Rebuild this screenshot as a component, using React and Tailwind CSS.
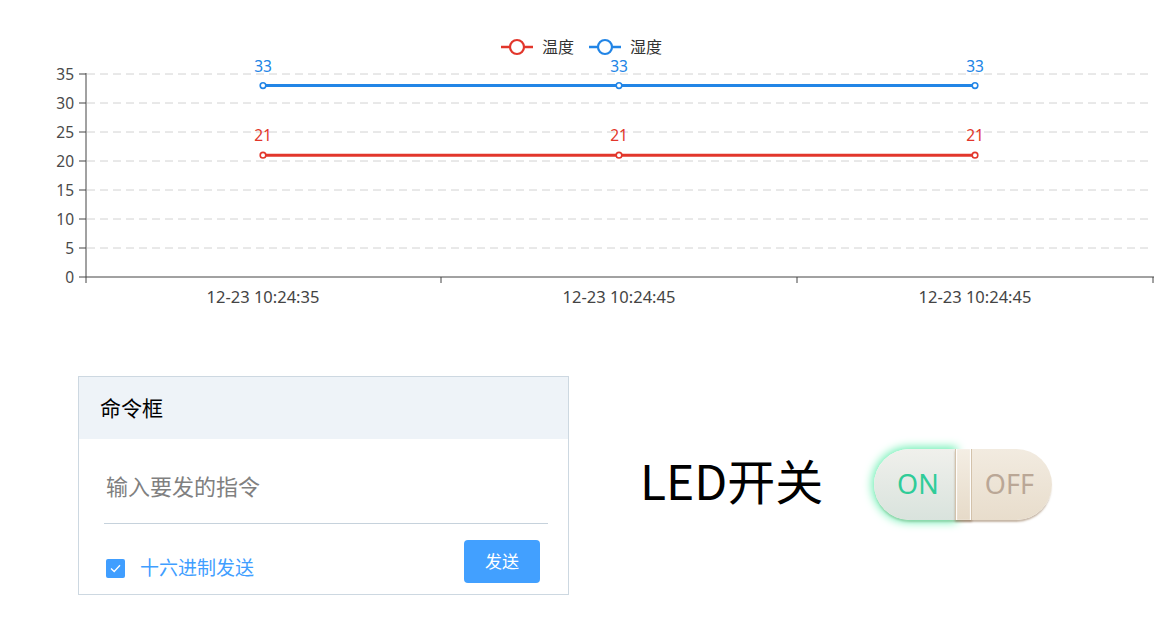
import React from 'react';

const ZERO_Y = 277;
const UNIT = 5.8;
const yOf = (v) => ZERO_Y - v * UNIT;

const xPoints = [263, 619, 975];
const xLabels = ['12-23 10:24:35', '12-23 10:24:45', '12-23 10:24:45'];
const series = [
  { name: '温度', color: '#e2362b', value: 21 },
  { name: '湿度', color: '#2285e6', value: 33 },
];

const Chart = () => {
  const ticks = [0, 5, 10, 15, 20, 25, 30, 35];

  return (
    <svg width="1156" height="310" className="block font-['Noto_Sans','Noto_Sans_CJK_SC',sans-serif]">
      {/* grid lines */}
      {ticks.slice(1).map((t) => (
        <line key={t} x1="87" x2="1152" y1={yOf(t)} y2={yOf(t)} stroke="#d2d2d2" strokeDasharray="8 5" />
      ))}

      {/* y axis */}
      <line x1="86" x2="86" y1={yOf(35) - 1} y2={ZERO_Y} stroke="#444" strokeWidth="1" />
      {ticks.map((t) => (
        <g key={t}>
          <line x1="79" x2="86" y1={yOf(t)} y2={yOf(t)} stroke="#444" />
          <text x="74" y={yOf(t)} textAnchor="end" dominantBaseline="central" fontSize="15.5" fill="#4a4a4a">
            {t}
          </text>
        </g>
      ))}

      {/* x axis */}
      <line x1="86" x2="1154" y1={ZERO_Y} y2={ZERO_Y} stroke="#444" />
      {[86, 441, 797, 1153].map((x) => (
        <line key={x} x1={x} x2={x} y1={ZERO_Y} y2={ZERO_Y + 6} stroke="#444" />
      ))}
      {xPoints.map((x, i) => (
        <text key={i} x={x} y="296" textAnchor="middle" dominantBaseline="central" fontSize="16.5" fill="#444">
          {xLabels[i]}
        </text>
      ))}

      {/* series */}
      {series.map((s) => (
        <g key={s.name}>
          <line x1={xPoints[0]} x2={xPoints[2]} y1={yOf(s.value)} y2={yOf(s.value)} stroke={s.color} strokeWidth="3" />
          {xPoints.map((x) => (
            <g key={x}>
              <circle cx={x} cy={yOf(s.value)} r="2.8" fill="#fff" stroke={s.color} strokeWidth="1.6" />
              <text x={x} y={yOf(s.value) - 20} textAnchor="middle" dominantBaseline="central" fontSize="15.5" fill={s.color}>
                {s.value}
              </text>
            </g>
          ))}
        </g>
      ))}

      {/* legend */}
      {series.map((s, i) => {
        const x0 = 501 + i * 88;
        return (
          <g key={s.name}>
            <line x1={x0} x2={x0 + 32} y1="47" y2="47" stroke={s.color} strokeWidth="2.5" />
            <circle cx={x0 + 16} cy="47" r="7" fill="#fff" stroke={s.color} strokeWidth="2.2" />
            <text x={x0 + 41} y="47" dominantBaseline="central" fontSize="16" fill="#333">
              {s.name}
            </text>
          </g>
        );
      })}
    </svg>
  );
};

const CommandBox = () => (
  <div className="w-[491px] h-[219px] border border-[#cdd8e1] bg-white flex flex-col">
    <div className="h-[62px] bg-[#eef3f8] flex items-center pl-[21px] pt-[2px] text-[21px] text-black">命令框</div>
    <div className="pl-[25px] pr-[20px] pt-[29px]">
      <div className="h-[56px] border-b border-[#c6d2dc] pl-[2px] pt-[2px] text-[22px] text-[#808080]">
        输入要发的指令
      </div>
      <div className="flex items-center justify-between mt-[16px] pl-[2px] pr-[8px]">
        <div className="flex items-center gap-[15px] mt-[13px]">
          <span className="w-[19px] h-[19px] rounded-[2px] bg-[#409eff] flex items-center justify-center">
            <svg width="11" height="9" viewBox="0 0 11 9" fill="none">
              <path d="M1 4.5 L4.2 7.5 L10 1.2" stroke="#fff" strokeWidth="1.3" />
            </svg>
          </span>
          <span className="text-[19px] text-[#409eff]">十六进制发送</span>
        </div>
        <button className="w-[76px] h-[43px] rounded-[4px] bg-[#42a0ff] text-white text-[17px]">发送</button>
      </div>
    </div>
  </div>
);

const LedSwitch = () => (
  <div className="flex h-[71px] w-[178px] rounded-full shadow-[0_3px_2px_-1px_rgba(150,120,90,0.55)] font-['Noto_Sans',sans-serif]">
    <div className="flex w-[81px] items-center justify-center rounded-l-full bg-gradient-to-b from-[#f0f0ec] to-[#d9e3dd] shadow-[0_0_10px_2px_#6aefb2] text-[27px] text-[#2fcc98] pl-[6px]">
      ON
    </div>
    <div className="w-[17px] bg-gradient-to-b from-[#f4eee4] to-[#e6dac8] border-x border-[#d3c2ab] shadow-[inset_1px_0_1px_#fff,inset_-1px_0_1px_#fff,0_2px_2px_rgba(120,90,60,0.4)]" />
    <div className="flex flex-1 items-center justify-center rounded-r-full bg-gradient-to-b from-[#f2ebe0] to-[#e8ddcc] text-[27px] text-[#baa796] pr-[6px]">
      OFF
    </div>
  </div>
);

export default function App() {
  return (
    <div className="w-[1156px] h-[620px] bg-white overflow-hidden font-['Noto_Sans','Noto_Sans_CJK_SC',sans-serif]">
      <Chart />
      <div className="flex items-center mt-[66px] ml-[78px]">
        <CommandBox />
        <div className="ml-[71px] mb-[14px] text-[48px] text-black leading-none font-['Noto_Sans_CJK_SC',sans-serif]">LED开关</div>
        <div className="ml-[51px] mb-[2px]">
          <LedSwitch />
        </div>
      </div>
    </div>
  );
}
